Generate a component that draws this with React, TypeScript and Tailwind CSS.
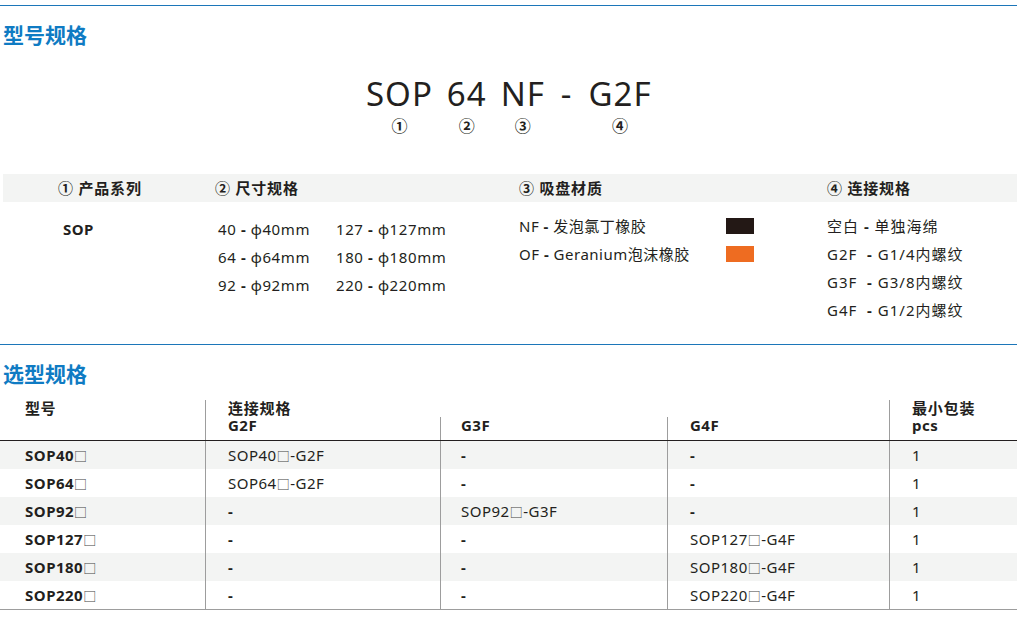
import React from "react";

const Sq = () => <span className="font-normal text-[#444] text-[13px]">□</span>;

const rows: [string, string, string, string, string][] = [
  ["SOP40", "SOP40□-G2F", "-", "-", "1"],
  ["SOP64", "SOP64□-G2F", "-", "-", "1"],
  ["SOP92", "-", "SOP92□-G3F", "-", "1"],
  ["SOP127", "-", "-", "SOP127□-G4F", "1"],
  ["SOP180", "-", "-", "SOP180□-G4F", "1"],
  ["SOP220", "-", "-", "SOP220□-G4F", "1"],
];

function Cell({ v }: { v: string }) {
  if (v === "-") return <span className="font-bold">-</span>;
  const parts = v.split("□");
  if (parts.length === 2)
    return (
      <span>
        {parts[0]}
        <Sq />
        {parts[1]}
      </span>
    );
  return <span>{v}</span>;
}

export default function App() {
  return (
    <div className="w-[1017px] h-[619px] bg-white text-[#231f20] font-['Noto_Sans','Noto_Sans_CJK_SC',sans-serif] overflow-hidden">
      <div className="pt-[5px]">
        <div className="h-px bg-[#1c76b9]" />
      </div>
      <div className="mt-[15px] pl-[3px] text-[21px] leading-[28px] font-bold text-[#0f7bc3]">型号规格</div>

      {/* formula */}
      <div className="mt-[25px] flex pl-[366px] items-start">
        {[
          ["SOP", "①", "ml-0"],
          ["64", "②", "ml-[14px]"],
          ["NF", "③", "ml-[14px]"],
          ["-", "", "ml-[16px]"],
          ["G2F", "④", "ml-[16px]"],
        ].map(([w, n, m]) => (
          <div key={w} className={`flex flex-col items-center ${m}`}>
            <span className="text-[33px] leading-[40px] tracking-[1px]">{w}</span>
            <span className="mt-[2px] text-[16px] leading-[18px] font-bold font-['Noto_Sans_CJK_SC',sans-serif]">{n || "\u00a0"}</span>
          </div>
        ))}
      </div>

      {/* band */}
      <div className="mt-[40px] ml-[3px] h-[28px] bg-[#f3f4f3] grid grid-cols-[157px_304px_308px_1fr] pl-[55px] items-center text-[15px] tracking-[0.8px] font-bold leading-[28px]">
        <div>① 产品系列</div>
        <div>② 尺寸规格</div>
        <div>③ 吸盘材质</div>
        <div>④ 连接规格</div>
      </div>
      <div className="h-[142px] grid grid-cols-[157px_304px_308px_1fr] content-start pl-[58px] text-[15px] leading-[28px]">
        <div className="pt-[13px] pl-[5px] font-bold tracking-[0.4px]">SOP</div>
        <div className="pt-[13px] pl-[3px] grid grid-cols-[118px_1fr] auto-rows-[28px] content-start tracking-[0.6px]">
          <div>40 <span className="font-bold">-</span> ф40mm</div>
          <div>127 <span className="font-bold">-</span> ф127mm</div>
          <div>64 <span className="font-bold">-</span> ф64mm</div>
          <div>180 <span className="font-bold">-</span> ф180mm</div>
          <div>92 <span className="font-bold">-</span> ф92mm</div>
          <div>220 <span className="font-bold">-</span> ф220mm</div>
        </div>
        <div className="pt-[10px] tracking-[0.5px]">
          <div className="flex items-center h-[28px]">
            <span className="w-[207px]">NF <span className="font-bold">-</span> 发泡氯丁橡胶</span>
            <span className="w-[28px] h-[16px] bg-[#231815]" />
          </div>
          <div className="flex items-center h-[28px]">
            <span className="w-[207px]">OF <span className="font-bold">-</span> Geranium泡沫橡胶</span>
            <span className="w-[28px] h-[16px] bg-[#ee6c21]" />
          </div>
        </div>
        <div className="pt-[10px] tracking-[1px]">
          <div>空白 <span className="font-bold">-</span> 单独海绵</div>
          <div>G2F&nbsp; <span className="font-bold">-</span> G1/4内螺纹</div>
          <div>G3F&nbsp; <span className="font-bold">-</span> G3/8内螺纹</div>
          <div>G4F&nbsp; <span className="font-bold">-</span> G1/2内螺纹</div>
        </div>
      </div>
      <div className="h-px bg-[#1c76b9]" />
      <div className="mt-[15px] pl-[3px] text-[21px] leading-[28px] font-bold text-[#0f7bc3]">选型规格</div>

      {/* table */}
      <div className="mt-[12px] text-[15px] tracking-[0.5px]">
        <div className="flex font-bold leading-[17px] border-b border-[#231f20]">
          <div className="w-[205px] pl-[25px]">型号</div>
          <div className="w-[684px] border-l border-[#9d9d9d]">
            <div className="pl-[22px] tracking-[0.8px]">连接规格</div>
            <div className="grid grid-cols-[234px_227px_222px]">
              <div className="pl-[22px] pb-[6px]">G2F</div>
              <div className="pl-[20px] border-l border-[#9d9d9d]">G3F</div>
              <div className="pl-[22px] border-l border-[#9d9d9d]">G4F</div>
            </div>
          </div>
          <div className="flex-1 pl-[22px] border-l border-[#9d9d9d]">
            <div className="tracking-[0.8px]">最小包装</div>
            <div>pcs</div>
          </div>
        </div>
        <div className="border-b border-[#9d9d9d]">
          {rows.map((r, i) => (
            <div
              key={r[0]}
              className={`grid grid-cols-[205px_235px_227px_222px_1fr] h-[28px] leading-[28px] ${i % 2 === 0 ? "bg-[#f3f4f3]" : "bg-white"}`}
            >
              <div className="pl-[25px] font-bold">
                {r[0]}
                <Sq />
              </div>
              <div className="pl-[22px] border-l border-[#9d9d9d]"><Cell v={r[1]} /></div>
              <div className="pl-[20px] border-l border-[#9d9d9d]"><Cell v={r[2]} /></div>
              <div className="pl-[22px] border-l border-[#9d9d9d]"><Cell v={r[3]} /></div>
              <div className="pl-[22px] border-l border-[#9d9d9d]">{r[4]}</div>
            </div>
          ))}
        </div>
      </div>
    </div>
  );
}
